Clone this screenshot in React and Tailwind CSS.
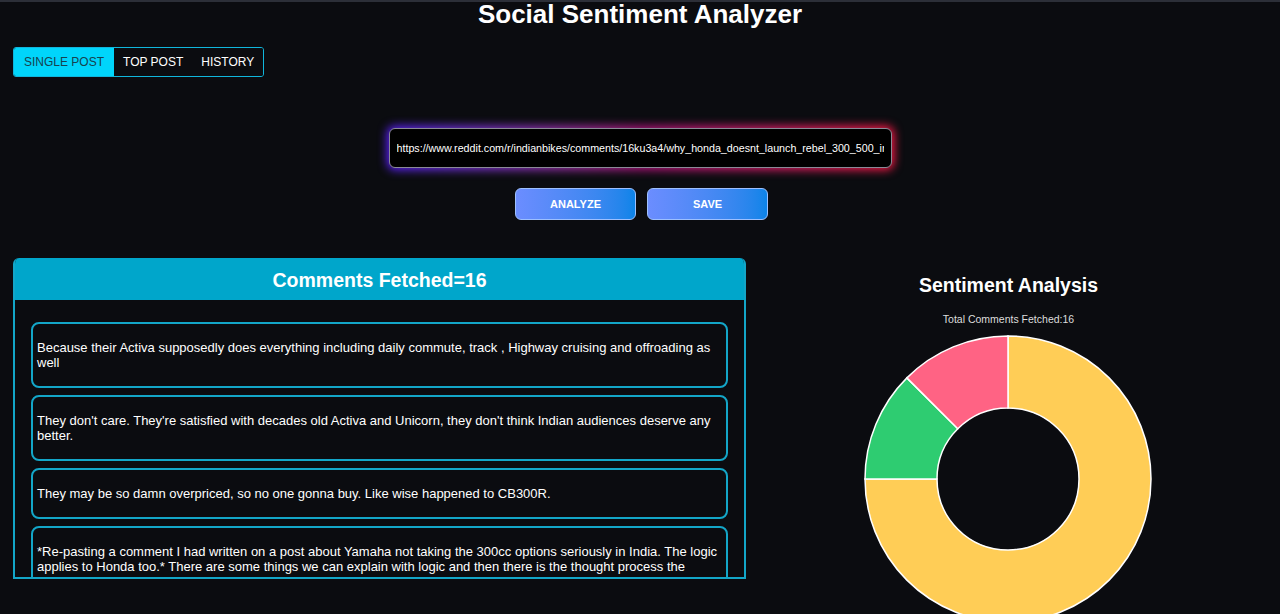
import React, { useState } from 'react';

const comments = [
    "Because their Activa supposedly does everything including daily commute, track , Highway cruising and offroading as well",
    "They don't care. They're satisfied with decades old Activa and Unicorn, they don't think Indian audiences deserve any better.",
    "They may be so damn overpriced, so no one gonna buy. Like wise happened to CB300R.",
    "*Re-pasting a comment I had written on a post about Yamaha not taking the 300cc options seriously in India. The logic applies to Honda too.* There are some things we can explain with logic and then there is the thought process the Japanese have when it comes to launching their premium bikes in India. The only thing I am sure of is that they are not interested in the segment.",
    "Honda is happy selling scooters and commuters in volume.",
];

const tabs = ["SINGLE POST", "TOP POST", "HISTORY"];

const Donut = () => (
    <svg width="290" height="290" viewBox="-145 -145 290 290">
        <path d="M 0 -143 A 143 143 0 1 1 -143 0 L -71 0 A 71 71 0 1 0 0 -71 Z" fill="#ffcd56" stroke="#fff" strokeWidth="1.5" />
        <path d="M -143 0 A 143 143 0 0 1 -101.12 -101.12 L -50.2 -50.2 A 71 71 0 0 0 -71 0 Z" fill="#2ecc71" stroke="#fff" strokeWidth="1.5" />
        <path d="M -101.12 -101.12 A 143 143 0 0 1 0 -143 L 0 -71 A 71 71 0 0 0 -50.2 -50.2 Z" fill="#ff6384" stroke="#fff" strokeWidth="1.5" />
    </svg>
);

const App = () => {
    const [active, setActive] = useState(0);
    const [url, setUrl] = useState("https://www.reddit.com/r/indianbikes/comments/16ku3a4/why_honda_doesnt_launch_rebel_300_500_in_india/");

    return (
        <div className="h-[614px] overflow-hidden bg-[#0b0c10] text-white font-['Liberation_Sans',Arial,sans-serif]">
            <div className="h-[2px] bg-[#2c2f38]" />
            <h1 className="text-[26px] leading-[24px] font-bold text-center">Social Sentiment Analyzer</h1>

            <div className="px-[13px] mt-[21px]">
                <div className="inline-flex border border-[#10b6dc] rounded-[3px] overflow-hidden">
                    {tabs.map((t, i) => (
                        <button
                            key={t}
                            onClick={() => setActive(i)}
                            className={
                                i === active
                                    ? "h-[28px] px-[10px] text-[12px] bg-[#00d5fb] text-[#17424f]"
                                    : "h-[28px] px-[9px] text-[12px] bg-[#0b0c10] text-white"
                            }
                        >
                            {t}
                        </button>
                    ))}
                </div>
            </div>

            <div className="flex justify-center mt-[51px]">
                <div className="relative w-[503px] h-[40px]">
                    <div className="absolute -inset-[2px] rounded-[8px] bg-gradient-to-r from-[#5a1dff] via-[#b4127f] to-[#ff1744] blur-[5px]" />
                    <input
                        className="relative w-full h-full bg-black border border-[#8a8a96] rounded-[6px] px-[7px] text-[10.7px] text-white outline-none"
                        value={url}
                        onChange={(e) => setUrl(e.target.value)}
                    />
                </div>
            </div>

            <div className="flex justify-center gap-[11px] mt-[20px] ml-[3px]">
                <button className="w-[121px] h-[32px] rounded-[6px] border border-[#9dc0ff] bg-gradient-to-r from-[#6b8dff] to-[#0a84e9] text-[11px] font-bold">ANALYZE</button>
                <button className="w-[121px] h-[32px] rounded-[6px] border border-[#9dc0ff] bg-gradient-to-r from-[#6b8dff] to-[#0a84e9] text-[11px] font-bold">SAVE</button>
            </div>

            <div className="flex mt-[38px] px-[13px]">
                <div className="w-[733px] h-[321px] flex flex-col border-2 border-t-0 border-[#13a6c8] rounded-t-[6px] overflow-hidden">
                    <div className="h-[42px] shrink-0 bg-[#00a6cb] flex items-center justify-center -mx-[2px] pt-[3px]">
                        <h2 className="text-[19.5px] font-bold">Comments Fetched=16</h2>
                    </div>
                    <div className="flex-1 overflow-hidden px-[16px] pt-[22px] flex flex-col gap-[7px]">
                        {comments.map((c, i) => (
                            <div key={i} className="border-2 border-[#13a6c8] rounded-[8px] px-[4px] py-[16px] text-[13px] leading-[15px]">
                                {c}
                            </div>
                        ))}
                    </div>
                </div>

                <div className="flex-1 flex flex-col items-center ml-[4px] pt-[15px]">
                    <h2 className="text-[19.5px] leading-[24px] font-bold">Sentiment Analysis</h2>
                    <p className="text-[10.5px] leading-[12px] text-[#dddddd] mt-[16px]">Total Comments Fetched:16</p>
                    <div className="mt-[9px] -ml-[2px]">
                        <Donut />
                    </div>
                </div>
            </div>
        </div>
    );
};

export default App;
